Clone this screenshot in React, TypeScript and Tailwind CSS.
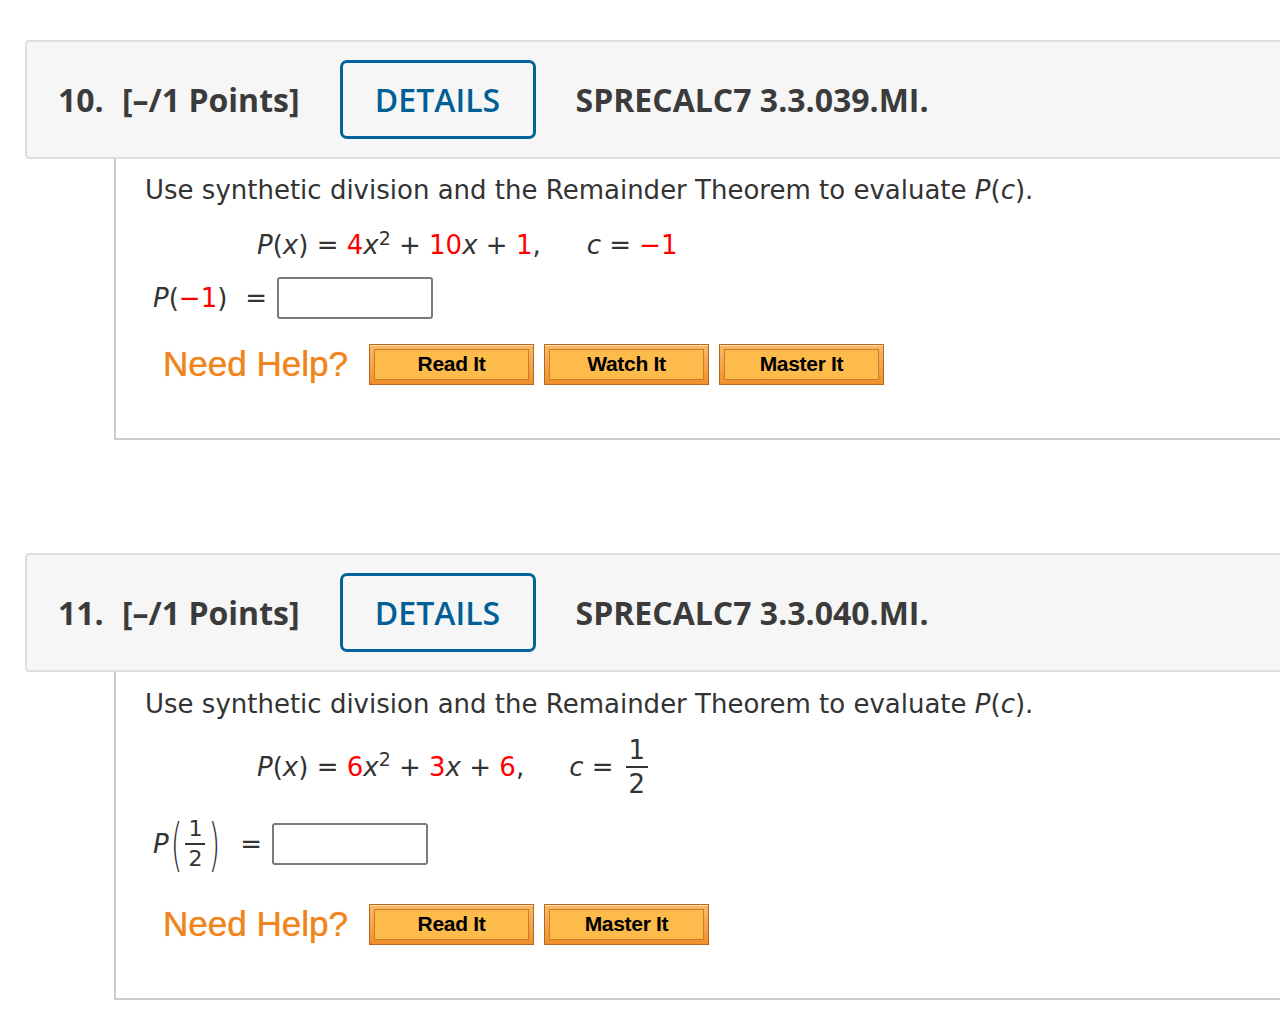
import React from 'react';

const red = 'text-[#ff0000]';

const HelpButton = ({ label }: { label: string }) => (
  <div className="h-[41px] w-[165px] border border-[#b8681c] bg-gradient-to-b from-[#fbb866] to-[#f0902a] p-[4px] shadow-[inset_0_1px_0_#ffe0b0]">
    <div className="flex h-full w-full items-center justify-center border border-[#c97c2c] bg-[#fdbb4c] font-['Liberation_Sans',sans-serif] text-[21px] font-bold tracking-[-0.3px] text-black">
      {label}
    </div>
  </div>
);

const Fraction = ({ top, bottom, className = '' }: { top: string; bottom: string; className?: string }) => (
  <span className={'inline-flex flex-col items-center align-middle leading-none ' + className}>
    <span className="px-[3px] pb-[3px]">{top}</span>
    <span className="h-[2px] w-full bg-[#333]" />
    <span className="px-[3px] pt-[3px]">{bottom}</span>
  </span>
);

const Header = ({ num, code }: { num: string; code: string }) => (
  <div className="flex h-[119px] items-center rounded-l-[4px] border-y-2 border-l-2 border-[#dedede] bg-[#f6f6f6] pl-[31px] font-['Open_Sans',sans-serif] text-[32px] font-bold text-[#3b3b3b]">
    <span className="w-[64px]">{num}</span>
    <span>[–/1 Points]</span>
    <div className="ml-[40px] flex h-[79px] w-[196px] items-center justify-center rounded-[7px] border-[3px] border-[#00649b] font-semibold text-[#005f96]">
      DETAILS
    </div>
    <span className="ml-[40px]">{code}</span>
  </div>
);

const NeedHelp = ({ buttons }: { buttons: string[] }) => (
  <div className="flex h-[52px] items-center">
    <span className="w-[224px] pl-[18px] font-['Liberation_Sans',sans-serif] text-[35px] text-[#f0841c] [text-shadow:0_0_1px_#f29a4a]">
      Need Help?
    </span>
    <div className="flex gap-[10px]">
      {buttons.map((b) => (
        <HelpButton key={b} label={b} />
      ))}
    </div>
  </div>
);

const Intro = () => (
  <p>
    Use synthetic division and the Remainder Theorem to evaluate <i>P</i>(<i>c</i>).
  </p>
);

const AnswerBox = () => (
  <div className="h-[42px] w-[156px] rounded-[3px] border-2 border-[#7a7a7a] bg-white" />
);

export default function App() {
  return (
    <div className="min-h-[1018px] bg-white pl-[25px] pt-[40px] font-['DejaVu_Sans',sans-serif] text-[#333]">
      {/* Question 10 */}
      <Header num="10." code="SPRECALC7 3.3.039.MI." />
      <div className="ml-[89px] h-[281px] border-b-2 border-l-2 border-[#cccccc] pl-[29px] pt-[12px] text-[26px]">
        <Intro />
        <div className="mt-[16px] pl-[112px]">
          <i>P</i>(<i>x</i>) = <span className={red}>4</span>
          <i>x</i>
          <sup className="text-[19px]">2</sup> + <span className={red}>10</span>
          <i>x</i> + <span className={red}>1</span>,<span className="inline-block w-[46px]" />
          <i>c</i> = <span className={red}>−1</span>
        </div>
        <div className="mt-[12px] flex h-[42px] items-center pl-[8px]">
          <span>
            <i>P</i>(<span className={red}>−1</span>)
          </span>
          <span className="ml-[18px] mr-[10px]">=</span>
          <AnswerBox />
        </div>
        <div className="mt-[19px]">
          <NeedHelp buttons={['Read It', 'Watch It', 'Master It']} />
        </div>
      </div>

      <div className="h-[113px]" />

      {/* Question 11 */}
      <Header num="11." code="SPRECALC7 3.3.040.MI." />
      <div className="ml-[89px] h-[328px] border-b-2 border-l-2 border-[#cccccc] pl-[29px] pt-[13px] text-[26px]">
        <Intro />
        <div className="mt-[13px] flex h-[60px] items-center pl-[112px]">
          <span>
            <i>P</i>(<i>x</i>) = <span className={red}>6</span>
            <i>x</i>
            <sup className="text-[19px]">2</sup> + <span className={red}>3</span>
            <i>x</i> + <span className={red}>6</span>,<span className="inline-block w-[45px]" />
            <i>c</i> ={' '}
          </span>
          <Fraction top="1" bottom="2" className="ml-[12px]" />
        </div>
        <div className="mt-[19px] flex h-[56px] items-center pl-[8px]">
          <span className="flex items-center">
            <i>P</i>
            <span className="ml-[2px] inline-block scale-y-[1.9] text-[30px] font-extralight">(</span>
            <Fraction top="1" bottom="2" className="px-[3px] text-[22px]" />
            <span className="inline-block scale-y-[1.9] text-[30px] font-extralight">)</span>
          </span>
          <span className="ml-[20px] mr-[10px]">=</span>
          <AnswerBox />
        </div>
        <div className="mt-[26px]">
          <NeedHelp buttons={['Read It', 'Master It']} />
        </div>
      </div>
    </div>
  );
}
